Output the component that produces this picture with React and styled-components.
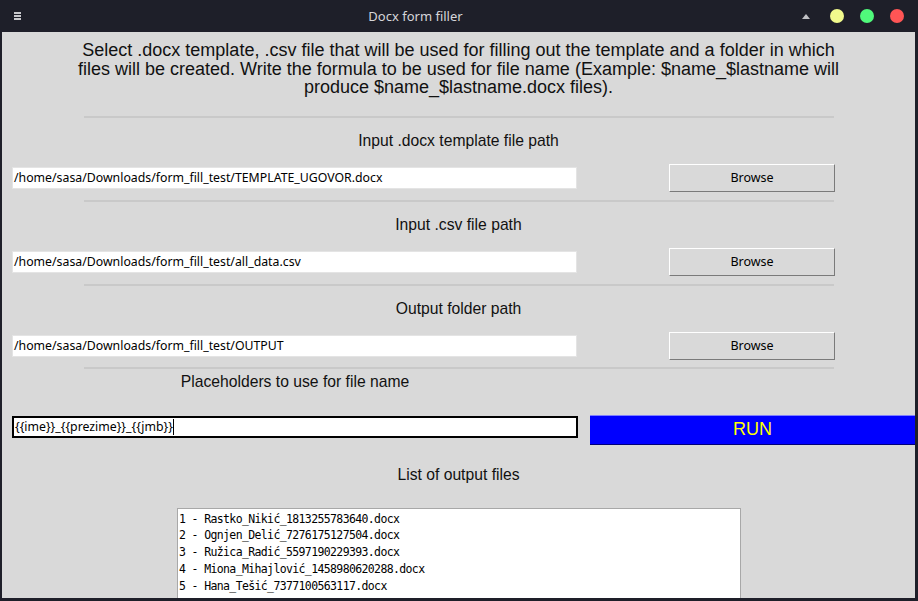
import React from 'react';
import styled, { createGlobalStyle } from 'styled-components';

const GlobalStyle = createGlobalStyle`
  html, body {
    margin: 0;
    padding: 0;
    background: #1e1f29;
    overflow: hidden;
  }
`;

const Frame = styled.div`
  width: 918px;
  height: 601px;
  display: flex;
  flex-direction: column;
  background: #1e1f29;
  overflow: hidden;
`;

const TitleBar = styled.div`
  height: 32px;
  flex-shrink: 0;
  display: flex;
  align-items: center;
  padding: 0 14px;
  font-family: "Noto Sans", sans-serif;
  font-size: 13px;
  color: #d6d6da;
`;

const Burger = styled.div`
  width: 7px;
  display: flex;
  flex-direction: column;
  gap: 1px;
  span {
    height: 2px;
    background: #c8c8cc;
  }
`;

const Title = styled.div`
  flex: 1;
  text-align: center;
  padding-left: 8px;
`;

const Controls = styled.div`
  display: flex;
  align-items: center;
  gap: 16px;
`;

const Arrow = styled.div`
  width: 0;
  height: 0;
  border-left: 4px solid transparent;
  border-right: 4px solid transparent;
  border-bottom: 5px solid #c0c0c4;
  margin-right: 4px;
`;

const Dot = styled.div`
  width: 14px;
  height: 14px;
  border-radius: 50%;
  background: ${p => p.$c};
`;

const Body = styled.div`
  flex: 1;
  margin: 0 3px 3px 2px;
  background: #d9d9d9;
  display: flex;
  flex-direction: column;
  overflow: hidden;
  font-family: "Liberation Sans", Arial, sans-serif;
  color: #111;
  & > * {
    flex-shrink: 0;
  }
`;

const Intro = styled.div`
  margin-top: 9px;
  font-size: 18px;
  line-height: 18.5px;
  text-align: center;
`;

const Separator = styled.div`
  width: 750px;
  height: 2px;
  margin: ${p => p.$top}px 0 0 82px;
  background: #c9c9c9;
`;

const Label = styled.div`
  font-size: 15.7px;
  line-height: 20px;
  margin-top: ${p => p.$top}px;
  text-align: center;
  width: ${p => (p.$half ? '586px' : 'auto')};
`;

const Row = styled.div`
  display: flex;
  align-items: ${p => (p.$top ? 'flex-start' : 'center')};
  margin-top: ${p => p.$mt}px;
  padding-left: 10px;
`;

const Entry = styled.div`
  box-sizing: border-box;
  width: ${p => p.$w}px;
  height: 22px;
  margin-top: ${p => p.$dy || 0}px;
  background: #fff;
  border: ${p => (p.$focus ? '2px solid #000' : '1px solid #e4e4e4')};
  padding: 0 1px;
  display: flex;
  align-items: center;
  font-family: "Noto Sans", sans-serif;
  font-size: 12.3px;
  color: #000;
  white-space: nowrap;
`;

const Caret = styled.span`
  display: inline-block;
  width: 1px;
  height: 16px;
  background: #000;
`;

const Button = styled.div`
  box-sizing: border-box;
  width: 166px;
  height: 28px;
  margin-left: 92px;
  background: #d9d9d9;
  border: 1px solid;
  border-color: #fff #7a7a7a #7a7a7a #fff;
  display: flex;
  align-items: center;
  justify-content: center;
  font-family: "Noto Sans", sans-serif;
  font-size: 12.5px;
  color: #000;
`;

const RunButton = styled.div`
  box-sizing: border-box;
  flex: 1;
  height: 30px;
  margin-left: 12px;
  background: #0000ff;
  border-top: 1px solid #7f7fff;
  border-bottom: 1px solid #00007a;
  display: flex;
  align-items: center;
  justify-content: center;
  font-family: "Liberation Sans", Arial, sans-serif;
  font-size: 18px;
  color: #ffff00;
`;

const ListBox = styled.div`
  box-sizing: border-box;
  width: 564px;
  margin: 23px 0 0 175px;
  height: 110px;
  background: #fff;
  border: 1px solid #a8a8a8;
  padding: 2px 0 0 1px;
  font-family: "DejaVu Sans Mono", monospace;
  font-size: 11.5px;
  letter-spacing: -0.63px;
  line-height: 16.8px;
  color: #000;
`;

const sections = [
  { label: 'Input .docx template file path', path: '/home/sasa/Downloads/form_fill_test/TEMPLATE_UGOVOR.docx' },
  { label: 'Input .csv file path', path: '/home/sasa/Downloads/form_fill_test/all_data.csv' },
  { label: 'Output folder path', path: '/home/sasa/Downloads/form_fill_test/OUTPUT' },
];

const files = [
  'Rastko_Nikić_1813255783640.docx',
  'Ognjen_Delić_7276175127504.docx',
  'Ružica_Radić_5597190229393.docx',
  'Miona_Mihajlović_1458980620288.docx',
  'Hana_Tešić_7377100563117.docx',
];

export default function App() {
  return (
    <Frame>
      <GlobalStyle />
      <TitleBar>
        <Burger><span /><span /><span /></Burger>
        <Title>Docx form filler</Title>
        <Controls>
          <Arrow />
          <Dot $c="#f1fa8c" />
          <Dot $c="#50fa7b" />
          <Dot $c="#ff5555" />
        </Controls>
      </TitleBar>
      <Body>
        <Intro>
          Select .docx template, .csv file that will be used for filling out the template and a folder in which<br />
          files will be created. Write the formula to be used for file name (Example: $name_$lastname will<br />
          produce $name_$lastname.docx files).
        </Intro>
        {sections.map((s, i) => (
          <React.Fragment key={s.label}>
            <Separator $top={i === 0 ? 19 : 8} />
            <Label $top={13}>{s.label}</Label>
            <Row $mt={13}>
              <Entry $w={565}>{s.path}</Entry>
              <Button>Browse</Button>
            </Row>
          </React.Fragment>
        ))}
        <Separator $top={7} />
        <Label $top={3} $half>Placeholders to use for file name</Label>
        <Row $mt={23} $top>
          <Entry $w={566} $dy={1} $focus>{'{{ime}}_{{prezime}}_{{jmb}}'}<Caret /></Entry>
          <RunButton>RUN</RunButton>
        </Row>
        <Label $top={20}>List of output files</Label>
        <ListBox>
          {files.map((f, i) => (
            <div key={f}>{`${i + 1} - ${f}`}</div>
          ))}
        </ListBox>
      </Body>
    </Frame>
  );
}
